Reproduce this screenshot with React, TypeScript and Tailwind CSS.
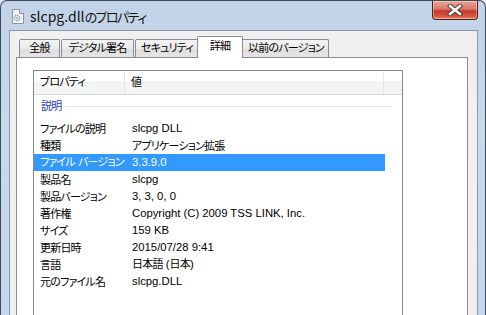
import React from "react";

const rows: [string, string][] = [
  ["ファイルの説明", "slcpg DLL"],
  ["種類", "アプリケーション拡張"],
  ["ファイル バージョン", "3.3.9.0"],
  ["製品名", "slcpg"],
  ["製品バージョン", "3, 3, 0, 0"],
  ["著作権", "Copyright (C) 2009 TSS LINK, Inc."],
  ["サイズ", "159 KB"],
  ["更新日時", "2015/07/28 9:41"],
  ["言語", "日本語 (日本)"],
  ["元のファイル名", "slcpg.DLL"],
];

const cjk = /[\u3000-\u9fff]/;

function T({ s }: { s: string }) {
  const parts: { t: string; c: boolean }[] = [];
  for (const ch of s) {
    const c = cjk.test(ch);
    const last = parts[parts.length - 1];
    if (last && last.c === c) last.t += ch;
    else parts.push({ t: ch, c });
  }
  return (
    <>
      {parts.map((p, i) =>
        p.c ? (
          <span key={i} className="text-[11px] tracking-[-0.8px]">
            {p.t}
          </span>
        ) : (
          <span key={i} className="text-[11.3px]">
            {p.t}
          </span>
        )
      )}
    </>
  );
}

function FileIcon() {
  return (
    <svg width="12" height="15" viewBox="0 0 12 15">
      <path d="M0.5 0.5 H7.5 L11.5 4.5 V14.5 H0.5 Z" fill="#f4f6f8" stroke="#8a939e" />
      <path d="M7.5 0.5 V4.5 H11.5" fill="#dde2e8" stroke="#8a939e" />
      <circle cx="5" cy="9" r="2.6" fill="none" stroke="#7d8fa6" strokeWidth="1.4" strokeDasharray="1.2 0.8" />
      <circle cx="5" cy="9" r="1" fill="#9fb3c9" />
    </svg>
  );
}

function CloseIcon() {
  return (
    <svg width="16" height="12" viewBox="0 0 16 12">
      <path d="M3 2 L13 10 M13 2 L3 10" stroke="#3a3a3a" strokeWidth="4.2" strokeLinecap="square" />
      <path d="M3 2 L13 10 M13 2 L3 10" stroke="#ffffff" strokeWidth="2.4" strokeLinecap="square" />
    </svg>
  );
}

const tabs = [
  { label: "全般", w: "w-[41px]" },
  { label: "デジタル署名", w: "w-[73px]" },
  { label: "セキュリティ", w: "w-[64px]" },
];

const tabBg =
  "bg-[linear-gradient(to_bottom,#f3f3f3,#ebebeb_50%,#dedede_50%,#e5e5e5)]";

export default function App() {
  return (
    <div className="w-[486px] h-[315px] overflow-hidden bg-[#e4e7eb] [font-family:'Liberation_Sans','Noto_Sans_CJK_JP',sans-serif] [font-feature-settings:'palt'] text-[12px] text-black">
      <div className="h-full flex flex-col rounded-t-[7px] border border-b-0 border-[#3f4a58] bg-[linear-gradient(to_bottom,#c2d3e8,#c9d9ec_40%,#c4d7ee)]">
        {/* Title bar */}
        <div className="h-[29px] flex items-start shrink-0">
          <div className="flex items-center h-[29px] pl-[11px] gap-[6px]">
            <div className="mt-[2px]">
              <FileIcon />
            </div>
            <span className="[font-family:'Noto_Sans_CJK_JP',sans-serif] text-[14px] text-[#111] leading-none mt-[1px] whitespace-nowrap">
              slcpg.dll
              <span className="text-[13px] tracking-[-1.6px]">のプロパティ</span>
            </span>
          </div>
          <div className="ml-auto mr-[7px] w-[46px] h-[19px] rounded-b-[4px] border border-t-0 border-[#5a1f18] bg-[linear-gradient(to_bottom,#e7a698,#d9786a_45%,#c53a28_55%,#d4563f_85%,#e88a6e)] flex items-center justify-center shadow-[inset_0_0_0_1px_rgba(255,255,255,0.35)]">
            <CloseIcon />
          </div>
        </div>
        {/* Client area */}
        <div className="flex-1 ml-[8px] mr-[7px] border border-b-0 border-[#8b99aa] bg-[#f0f0f0] flex flex-col px-[6px] pt-[5px]">
          {/* Tabs */}
          <div className="flex items-end h-[21px] pl-[3px] relative z-10">
            {tabs.map((t) => (
              <div
                key={t.label}
                className={`${t.w} h-[18px] mr-[1px] border border-b-0 border-[#898c95] rounded-t-[2px] ${tabBg} flex items-center justify-center leading-none whitespace-nowrap`}
              >
                <T s={t.label} />
              </div>
            ))}
            <div className="relative z-20 -ml-[3px] -mr-[2px] w-[46px] h-[22px] -mb-[1px] border border-b-0 border-[#898c95] rounded-t-[2px] bg-white flex items-center justify-center leading-none pb-[2px] whitespace-nowrap">
              <T s="詳細" />
            </div>
            <div className={`w-[88px] h-[18px] border border-b-0 border-[#898c95] rounded-t-[2px] ${tabBg} flex items-center justify-center pl-[2px] leading-none whitespace-nowrap`}>
              <T s="以前のバージョン" />
            </div>
          </div>
          {/* Panel */}
          <div className="w-[452px] flex-1 border border-b-0 border-[#898c95] bg-white pl-[16px] pt-[12px] flex flex-col">
            <div className="w-[370px] flex-1 border border-b-0 border-[#828790] bg-white flex flex-col">
              {/* Header */}
              <div className="h-[24px] flex border-b border-[#d5d5d5] bg-[linear-gradient(to_bottom,#ffffff_0%,#ffffff_42%,#f3f4f6_42%,#f3f4f6_100%)]">
                <div className="w-[90px] pl-[6px] flex items-center leading-none whitespace-nowrap">
                  <T s="プロパティ" />
                </div>
                <div className="w-[1px] bg-[#e3e4e6]" />
                <div className="w-[258px] pl-[6px] flex items-center leading-none">
                  <T s="値" />
                </div>
                <div className="w-[1px] bg-[#e3e4e6] mt-[2px]" />
                <div className="flex-1" />
              </div>
              {/* Group */}
              <div className="h-[25px] flex items-start pt-[4px] pl-[7px]">
                <span className="text-[#1a3cb4] leading-[14px] whitespace-nowrap">
                  <T s="説明" />
                </span>
                <div className="flex-1 ml-[4px] mr-[10px] mt-[7px] h-[1px] bg-[#e0e4ec]" />
              </div>
              {/* Rows */}
              {rows.map(([k, v], i) => {
                const sel = i === 2;
                return (
                  <div
                    key={k}
                    className={`w-[351px] h-[17px] flex items-center leading-none ${sel ? "bg-[#3399ff] text-white" : ""}`}
                  >
                    <div className="w-[91px] shrink-0 pl-[6px] whitespace-nowrap">
                      <T s={k} />
                    </div>
                    <div className="pl-[7px] whitespace-nowrap">
                      <T s={v} />
                    </div>
                  </div>
                );
              })}
            </div>
          </div>
        </div>
      </div>
    </div>
  );
}
